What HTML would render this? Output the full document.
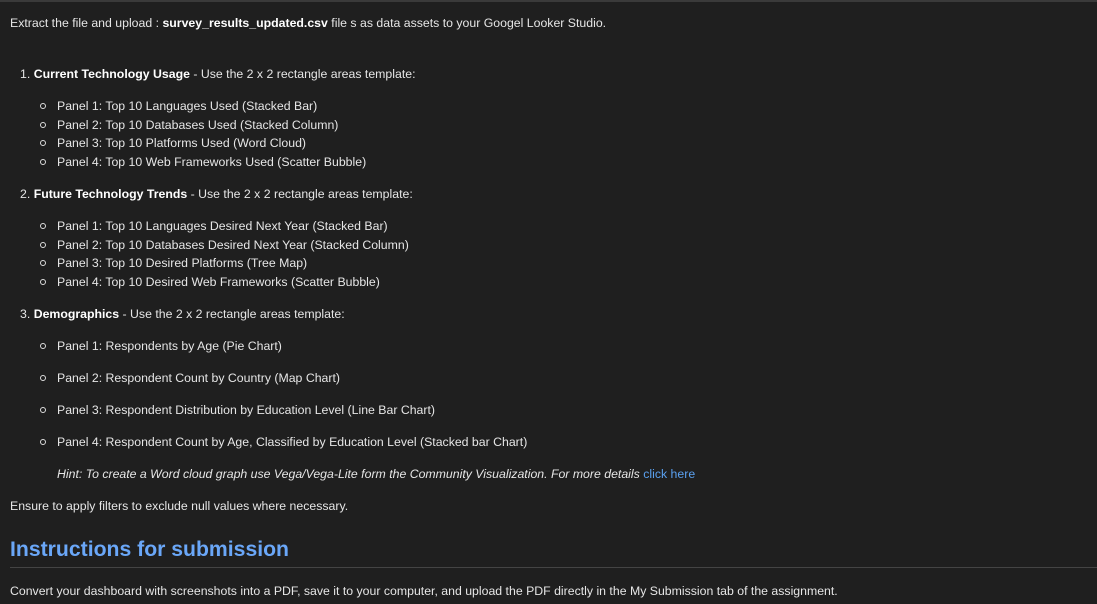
<!DOCTYPE html>
<html><head><meta charset="utf-8"><style>
html,body{margin:0;padding:0;width:1097px;height:604px;overflow:hidden;background:#1f1f1f;}
body{font-family:"Liberation Sans",sans-serif;font-size:12.3px;color:#e6e6e6;position:relative;}
.l{position:absolute;white-space:nowrap;line-height:16px;}
b{font-weight:bold;color:#fff}
.dot{position:absolute;width:4px;height:4px;border:1px solid #ddd;border-radius:50%;}
.top{position:absolute;left:0;top:0;width:1097px;height:2px;background:#3a3a3a;}
h2{position:absolute;left:10px;top:537px;margin:0;font-size:21.2px;color:#6aa7f8;font-weight:bold;line-height:26px;}
.hr{position:absolute;left:10px;top:567px;width:1087px;height:1px;background:#444;}
a{color:#5aa0ef;text-decoration:none}
</style></head><body>
<div class="top"></div>
<div class="l" style="left:10px;top:15px">Extract the file and upload : <b>survey_results_updated.csv</b> file s as data assets to your Googel Looker Studio.</div>

<div class="l" style="left:20px;top:66px">1. <b>Current Technology Usage</b> - Use the 2 x 2 rectangle areas template:</div>
<div class="dot" style="left:40px;top:103px"></div><div class="l" style="left:57px;top:98px">Panel 1: Top 10 Languages Used (Stacked Bar)</div>
<div class="dot" style="left:40px;top:122px"></div><div class="l" style="left:57px;top:117px">Panel 2: Top 10 Databases Used (Stacked Column)</div>
<div class="dot" style="left:40px;top:140px"></div><div class="l" style="left:57px;top:135px">Panel 3: Top 10 Platforms Used (Word Cloud)</div>
<div class="dot" style="left:40px;top:159px"></div><div class="l" style="left:57px;top:154px">Panel 4: Top 10 Web Frameworks Used (Scatter Bubble)</div>

<div class="l" style="left:20px;top:186px">2. <b>Future Technology Trends</b> - Use the 2 x 2 rectangle areas template:</div>
<div class="dot" style="left:40px;top:223px"></div><div class="l" style="left:57px;top:218px">Panel 1: Top 10 Languages Desired Next Year (Stacked Bar)</div>
<div class="dot" style="left:40px;top:242px"></div><div class="l" style="left:57px;top:237px">Panel 2: Top 10 Databases Desired Next Year (Stacked Column)</div>
<div class="dot" style="left:40px;top:260px"></div><div class="l" style="left:57px;top:255px">Panel 3: Top 10 Desired Platforms (Tree Map)</div>
<div class="dot" style="left:40px;top:279px"></div><div class="l" style="left:57px;top:274px">Panel 4: Top 10 Desired Web Frameworks (Scatter Bubble)</div>

<div class="l" style="left:20px;top:306px">3. <b>Demographics</b> - Use the 2 x 2 rectangle areas template:</div>
<div class="dot" style="left:40px;top:343px"></div><div class="l" style="left:57px;top:338px">Panel 1: Respondents by Age (Pie Chart)</div>
<div class="dot" style="left:40px;top:375px"></div><div class="l" style="left:57px;top:370px">Panel 2: Respondent Count by Country (Map Chart)</div>
<div class="dot" style="left:40px;top:407px"></div><div class="l" style="left:57px;top:402px">Panel 3: Respondent Distribution by Education Level (Line Bar Chart)</div>
<div class="dot" style="left:40px;top:439px"></div><div class="l" style="left:57px;top:434px">Panel 4: Respondent Count by Age, Classified by Education Level (Stacked bar Chart)</div>
<div class="l" style="left:57px;top:466px"><i>Hint: To create a Word cloud graph use Vega/Vega-Lite form the Community Visualization. For more details </i><a>click here</a></div>

<div class="l" style="left:10px;top:498px">Ensure to apply filters to exclude null values where necessary.</div>
<h2>Instructions for submission</h2>
<div class="hr"></div>
<div class="l" style="left:10px;top:583px">Convert your dashboard with screenshots into a PDF, save it to your computer, and upload the PDF directly in the My Submission tab of the assignment.</div>
</body></html>
